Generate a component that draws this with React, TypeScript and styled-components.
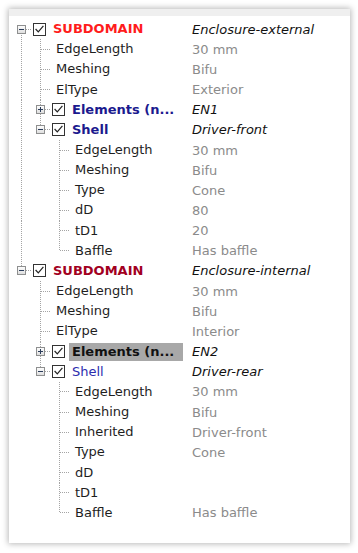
import React from 'react'
import styled, { createGlobalStyle, css } from 'styled-components'

const GlobalStyle = createGlobalStyle`
  html, body {
    margin: 0;
    padding: 0;
    background: #fff;
  }
  body {
    font-family: "DejaVu Sans", Verdana, sans-serif;
    font-size: 13px;
  }
`

type Tone = 'red' | 'crimson' | 'navy' | 'blue' | 'black' | 'plain'

interface TreeItem {
  label: string
  value?: string
  tone?: Tone
  bold?: boolean
  selected?: boolean
  ref?: boolean
  collapsed?: boolean
  children?: TreeItem[]
}

const tree: TreeItem[] = [
  {
    label: 'SUBDOMAIN',
    value: 'Enclosure-external',
    tone: 'red',
    bold: true,
    ref: true,
    children: [
      { label: 'EdgeLength', value: '30 mm' },
      { label: 'Meshing', value: 'Bifu' },
      { label: 'ElType', value: 'Exterior' },
      { label: 'Elements (n...', value: 'EN1', tone: 'navy', bold: true, ref: true, collapsed: true, children: [] },
      {
        label: 'Shell',
        value: 'Driver-front',
        tone: 'navy',
        bold: true,
        ref: true,
        children: [
          { label: 'EdgeLength', value: '30 mm' },
          { label: 'Meshing', value: 'Bifu' },
          { label: 'Type', value: 'Cone' },
          { label: 'dD', value: '80' },
          { label: 'tD1', value: '20' },
          { label: 'Baffle', value: 'Has baffle' },
        ],
      },
    ],
  },
  {
    label: 'SUBDOMAIN',
    value: 'Enclosure-internal',
    tone: 'crimson',
    bold: true,
    ref: true,
    children: [
      { label: 'EdgeLength', value: '30 mm' },
      { label: 'Meshing', value: 'Bifu' },
      { label: 'ElType', value: 'Interior' },
      { label: 'Elements (n...', value: 'EN2', tone: 'black', bold: true, selected: true, ref: true, collapsed: true, children: [] },
      {
        label: 'Shell',
        value: 'Driver-rear',
        tone: 'blue',
        ref: true,
        children: [
          { label: 'EdgeLength', value: '30 mm' },
          { label: 'Meshing', value: 'Bifu' },
          { label: 'Inherited', value: 'Driver-front' },
          { label: 'Type', value: 'Cone' },
          { label: 'dD' },
          { label: 'tD1' },
          { label: 'Baffle', value: 'Has baffle' },
        ],
      },
    ],
  },
]

interface FlatRow {
  item: TreeItem
  depth: number
  first: boolean
  last: boolean
  trail: boolean[]
}

function flatten(items: TreeItem[], depth = 0, trail: boolean[] = [], out: FlatRow[] = []) {
  items.forEach((item, i) => {
    const last = i === items.length - 1
    out.push({ item, depth, first: depth === 0 && i === 0, last, trail })
    if (item.children && !item.collapsed) flatten(item.children, depth + 1, [...trail, !last], out)
  })
  return out
}

const toneColor: Record<Tone, string> = {
  red: '#ff1c1c',
  crimson: '#a2001f',
  navy: '#1b1a8e',
  blue: '#2c2cae',
  black: '#111',
  plain: '#1e1e1e',
}

const LINE = '#a4a4a4'
const vDots = `repeating-linear-gradient(to bottom, ${LINE} 0 1px, transparent 1px 2px)`
const hDots = `repeating-linear-gradient(to right, ${LINE} 0 1px, transparent 1px 2px)`

function guideBg(up: boolean, down: boolean, right: boolean) {
  const layers: string[] = []
  if (up && down) layers.push(`${vDots} 9px 0 / 1px 100% no-repeat`)
  else if (up) layers.push(`${vDots} 9px 0 / 1px 50% no-repeat`)
  else if (down) layers.push(`${vDots} 9px 100% / 1px 50% no-repeat`)
  if (right) layers.push(`${hDots} 10px 50% / 9px 1px no-repeat`)
  return layers.length ? layers.join(', ') : 'none'
}

const Page = styled.div`
  padding: 9px 8px 10px 9px;
`

const Panel = styled.div`
  width: 341px;
  height: 534px;
  background: #fff;
  box-shadow: 0 0 6px 1px rgba(0, 0, 0, 0.28);
  display: flex;
  flex-direction: column;
`

const TopStrip = styled.div`
  height: 7px;
  background: #efefef;
`

const Tree = styled.div`
  padding: 3px 0 0 3px;
`

const Row = styled.div`
  display: grid;
  grid-template-columns: 180px 1fr;
  height: 20.17px;
  align-items: center;
`

const NameCell = styled.div`
  display: flex;
  align-items: center;
  height: 100%;
  min-width: 0;
`

const Guide = styled.span<{ $up?: boolean; $down?: boolean; $right?: boolean }>`
  flex: none;
  width: 19px;
  height: 100%;
  display: flex;
  align-items: center;
  padding-left: 5px;
  box-sizing: border-box;
  background: ${p => guideBg(!!p.$up, !!p.$down, !!p.$right)};
`

const Check = styled.svg`
  flex: none;
  margin: 0 4px 0 2px;
`

const Label = styled.span<{ $tone: Tone; $bold?: boolean; $selected?: boolean; $leaf?: boolean }>`
  height: 18px;
  line-height: 18px;
  padding: 0 3px;
  margin-left: ${p => (p.$leaf ? '3px' : '0')};
  white-space: nowrap;
  overflow: hidden;
  color: ${p => toneColor[p.$tone]};
  font-weight: ${p => (p.$bold ? 700 : 400)};
  ${p =>
    p.$selected &&
    css`
      background: #a8a8a8;
      padding-right: 9px;
    `}
`

const Value = styled.span<{ $ref?: boolean }>`
  white-space: nowrap;
  color: ${p => (p.$ref ? '#111' : '#8b8b8b')};
  font-style: ${p => (p.$ref ? 'italic' : 'normal')};
`

function Expander({ open }: { open: boolean }) {
  return (
    <svg width="9" height="9" viewBox="0 0 9 9">
      <defs>
        <linearGradient id="exp" x1="0" y1="0" x2="0" y2="1">
          <stop offset="0" stopColor="#ffffff" />
          <stop offset="1" stopColor="#dcdcdc" />
        </linearGradient>
      </defs>
      <rect x="0.5" y="0.5" width="8" height="8" fill="url(#exp)" stroke="#8e8f8f" />
      <path d="M2 4.5h5" stroke="#2a3c5a" />
      {!open && <path d="M4.5 2v5" stroke="#2a3c5a" />}
    </svg>
  )
}

function CheckBox() {
  return (
    <Check width="13" height="13" viewBox="0 0 13 13">
      <rect x="0.5" y="0.5" width="12" height="12" fill="#fff" stroke="#333" />
      <path d="M2.6 6 L5.3 8.9 L10.4 2.9" fill="none" stroke="#222" strokeWidth="1.2" />
    </Check>
  )
}

function TreeRow({ row }: { row: FlatRow }) {
  const { item, first, last, trail } = row
  const isNode = !!item.children
  return (
    <Row>
      <NameCell>
        {trail.map((on, i) => (
          <Guide key={i} $up={on} $down={on} />
        ))}
        <Guide $up={!first} $down={!last} $right>
          {isNode && <Expander open={!item.collapsed} />}
        </Guide>
        {isNode && <CheckBox />}
        <Label
          $tone={item.tone ?? 'plain'}
          $bold={item.bold}
          $selected={item.selected}
          $leaf={!isNode}
        >
          {item.label}
        </Label>
      </NameCell>
      <Value $ref={item.ref}>{item.value}</Value>
    </Row>
  )
}

export default function App() {
  const rows = flatten(tree)
  return (
    <Page>
      <GlobalStyle />
      <Panel>
        <TopStrip />
        <Tree>
          {rows.map((r, i) => (
            <TreeRow key={i} row={r} />
          ))}
        </Tree>
      </Panel>
    </Page>
  )
}
